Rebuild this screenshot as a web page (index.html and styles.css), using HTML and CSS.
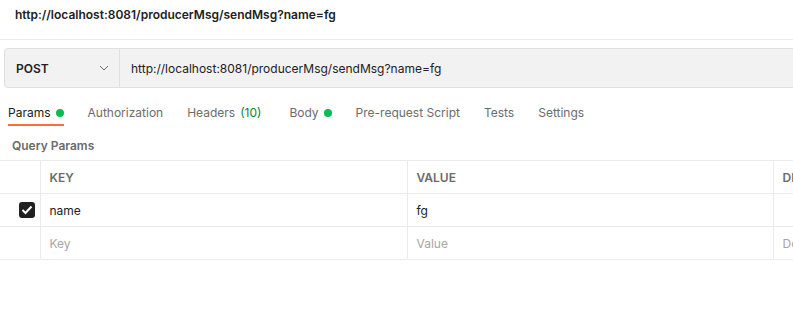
FILE: index.html
```html
<!DOCTYPE html>
<html lang="en">
  <head>
    <meta charset="UTF-8" />
    <meta name="viewport" content="width=device-width, initial-scale=1.0" />
    <title>sendMsg</title>
    <link rel="stylesheet" href="styles.css">
  </head>
  <body>
    <!-- Request title -->
    <div class="title-bar">http://localhost:8081/producerMsg/sendMsg?name=fg</div>

    <!-- Method + URL -->
    <div class="request-bar">
      <div class="method">
        <span>POST</span>
        <svg class="chevron" width="10" height="6" viewBox="0 0 10 6">
          <path d="M1 1l4 4 4-4" fill="none" stroke="#6b6b6b" stroke-width="1"/>
        </svg>
      </div>
      <div class="url">http://localhost:8081/producerMsg/sendMsg?name=fg</div>
    </div>

    <!-- Tabs -->
    <ul class="tabs">
      <li class="active">Params <span class="dot"></span></li>
      <li>Authorization</li>
      <li class="wide">Headers <span class="count">(10)</span></li>
      <li>Body <span class="dot"></span></li>
      <li>Pre-request Script</li>
      <li>Tests</li>
      <li>Settings</li>
    </ul>

    <div class="section-label">Query Params</div>

    <table class="params">
      <thead>
        <tr>
          <th class="check"></th>
          <th class="key">KEY</th>
          <th class="value">VALUE</th>
          <th class="desc">DESCRIPTION</th>
        </tr>
      </thead>
      <tbody>
        <tr>
          <td class="check">
            <span class="box">
              <svg width="12" height="10" viewBox="0 0 12 10">
                <path d="M1.5 5l3 3 6-6.5" fill="none" stroke="#fff" stroke-width="2"/>
              </svg>
            </span>
          </td>
          <td>name</td>
          <td>fg</td>
          <td></td>
        </tr>
        <tr class="empty">
          <td class="check"></td>
          <td>Key</td>
          <td>Value</td>
          <td>Description</td>
        </tr>
      </tbody>
    </table>
  </body>
</html>
```

FILE: styles.css
```css
body {
  margin: 0;
  width: 793px;
  overflow: hidden;
  font-family: Inter, "Liberation Sans", sans-serif;
  font-size: 12px;
  color: #212121;
  background: #fff;
}

/* Title */
.title-bar {
  height: 39px;
  line-height: 30px;
  padding-left: 15px;
  font-weight: 600;
  border-bottom: 1px solid #ebebeb;
}

/* Request bar */
.request-bar {
  display: flex;
  height: 38px;
  margin: 8px 0 0 4px;
  width: 800px;
  background: #f2f2f2;
  border: 1px solid #e0e0e0;
  border-radius: 4px;
}

.method {
  display: flex;
  align-items: center;
  justify-content: space-between;
  width: 115px;
  box-sizing: border-box;
  padding: 0 10px 0 11px;
  border-right: 1px solid #e0e0e0;
  font-weight: 600;
}

.url {
  display: flex;
  align-items: center;
  padding-left: 11px;
}

/* Tabs */
.tabs {
  display: flex;
  list-style-type: none;
  margin: 13px 0 0 8px;
  padding: 0;
  gap: 24px;
}

.tabs li {
  display: flex;
  align-items: center;
  gap: 5px;
  height: 25px;
  box-sizing: border-box;
  color: #6b6b6b;
  border-bottom: 2px solid transparent;
}

.tabs li.wide {
  margin-right: 4px;
}

.tabs li.active {
  color: #212121;
  border-bottom-color: #ff6c37;
}

.dot {
  width: 8px;
  height: 8px;
  border-radius: 50%;
  background: #0cbb52;
}

.count {
  color: #0d8040;
}

.section-label {
  margin: 12px 0 0 12px;
  height: 22px;
  font-weight: 600;
  color: #6b6b6b;
}

/* Table */
table.params {
  border-collapse: collapse;
  table-layout: fixed;
  width: 820px;
}

.params th,
.params td {
  height: 32px;
  padding: 0 9px;
  text-align: left;
  border: 1px solid #ebebeb;
  white-space: nowrap;
  overflow: hidden;
}

.params th:first-child,
.params td:first-child {
  border-left: none;
}

.params th {
  font-weight: 600;
  color: #6b6b6b;
}

.params .check {
  width: 40px;
  padding: 0;
  box-sizing: border-box;
}

.params th.key {
  width: 348px;
}

.params th.value {
  width: 347px;
}

.box {
  display: flex;
  align-items: center;
  justify-content: center;
  width: 16px;
  height: 16px;
  margin-left: 19px;
  border-radius: 3px;
  background: #212121;
}

.empty td {
  color: #a6a6a6;
}
```
